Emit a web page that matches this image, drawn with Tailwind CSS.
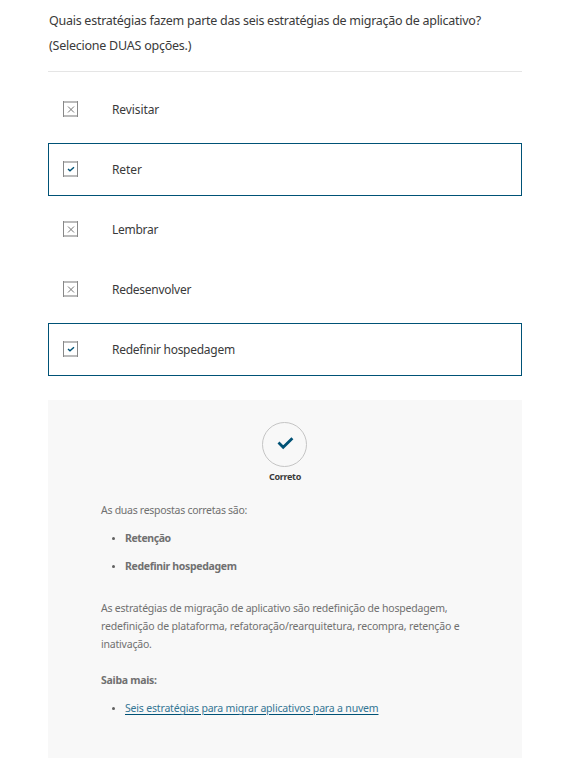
<!DOCTYPE html>
<html lang="pt-BR">
<head>
<meta charset="utf-8">
<title>Teste de conhecimento</title>
<script src="https://cdn.jsdelivr.net/npm/@tailwindcss/browser@4"></script>
</head>
<body class="bg-white font-['Noto_Sans',sans-serif] text-[#3a3a3a]">
<main class="mx-12 flex h-[758px] flex-col overflow-hidden">
  <h1 class="h-[72px] shrink-0 whitespace-nowrap border-b border-[#e5e5e5] pt-2 pl-px text-[12.5px] leading-[25px]">
    <span class="tracking-[-0.265px]">Quais estratégias fazem parte das seis estratégias de migração de aplicativo?</span><br><span class="tracking-[-0.24px]">(Selecione DUAS opções.)</span>
  </h1>
  <ul class="mt-[11px] flex shrink-0 flex-col gap-[7px] text-[12px]">
    <li class="flex h-[53px] items-center border border-transparent pl-[14px]">
      <svg class="mr-[34px] mb-0.5 h-4 w-[15px]" viewBox="0 0 15 16" fill="none"><path d="M0 1h15M0 15h15" stroke="#bbb" stroke-width="2"/><path d="M.5 0v16M14.5 0v16" stroke="#888"/><path d="m5 5.5 6 6m0-6-6 6" stroke="#777"/></svg>
      <span class="tracking-[-0.1px]">Revisitar</span>
    </li>
    <li class="flex h-[53px] items-center border border-[#005276] pl-[14px]">
      <svg class="mr-[34px] mb-0.5 h-4 w-[15px]" viewBox="0 0 15 16" fill="none"><path d="M0 1h15M0 15h15" stroke="#bbb" stroke-width="2"/><path d="M.5 0v16M14.5 0v16" stroke="#888"/><path d="m5 8 2 1.8 4-3.6" stroke="#005276" stroke-width="1.4"/></svg>
      <span class="tracking-[-0.1px]">Reter</span>
    </li>
    <li class="flex h-[53px] items-center border border-transparent pl-[14px]">
      <svg class="mr-[34px] mb-0.5 h-4 w-[15px]" viewBox="0 0 15 16" fill="none"><path d="M0 1h15M0 15h15" stroke="#bbb" stroke-width="2"/><path d="M.5 0v16M14.5 0v16" stroke="#888"/><path d="m5 5.5 6 6m0-6-6 6" stroke="#777"/></svg>
      <span class="tracking-[-0.27px]">Lembrar</span>
    </li>
    <li class="flex h-[53px] items-center border border-transparent pl-[14px]">
      <svg class="mr-[34px] mb-0.5 h-4 w-[15px]" viewBox="0 0 15 16" fill="none"><path d="M0 1h15M0 15h15" stroke="#bbb" stroke-width="2"/><path d="M.5 0v16M14.5 0v16" stroke="#888"/><path d="m5 5.5 6 6m0-6-6 6" stroke="#777"/></svg>
      <span class="tracking-[-0.27px]">Redesenvolver</span>
    </li>
    <li class="flex h-[53px] items-center border border-[#005276] pl-[14px]">
      <svg class="mr-[34px] mb-0.5 h-4 w-[15px]" viewBox="0 0 15 16" fill="none"><path d="M0 1h15M0 15h15" stroke="#bbb" stroke-width="2"/><path d="M.5 0v16M14.5 0v16" stroke="#888"/><path d="m5 8 2 1.8 4-3.6" stroke="#005276" stroke-width="1.4"/></svg>
      <span class="tracking-[-0.27px]">Redefinir hospedagem</span>
    </li>
  </ul>
  <section class="mt-6 grow bg-[#f8f8f8] px-[53px] pt-[22px] text-[10.5px] leading-[18px] text-[#707070]">
    <div class="flex flex-col items-center">
      <svg class="mr-px h-[45px] w-[45px]" viewBox="0 0 45 45" fill="none"><circle cx="22.5" cy="22.5" r="22" stroke="#c4c4c4"/><path d="m16.5 20.5 4.7 4.7 9.2-9" stroke="#005276" stroke-width="2.8"/></svg>
      <p class="mt-px text-[9px] font-bold tracking-[-0.3px] text-[#3a3a3a]">Correto</p>
    </div>
    <p class="mt-[15px] whitespace-nowrap"><span class="tracking-[-0.28px]">As duas respostas corretas são:</span></p>
    <ul class="mt-2.5 flex flex-col gap-2.5 font-bold">
      <li class="flex items-center gap-[10px] pl-[11px]"><i class="mt-px h-[3px] w-[3px] rounded-full bg-[#606060]"></i><span class="tracking-[-0.42px]">Retenção</span></li>
      <li class="flex items-center gap-[10px] pl-[11px]"><i class="mt-px h-[3px] w-[3px] rounded-full bg-[#606060]"></i><span class="tracking-[-0.33px]">Redefinir hospedagem</span></li>
    </ul>
    <p class="mt-6 whitespace-nowrap"><span class="tracking-[-0.21px]">As estratégias de migração de aplicativo são redefinição de hospedagem,</span><br><span class="tracking-[-0.17px]">redefinição de plataforma, refatoração/rearquitetura, recompra, retenção e</span><br><span class="tracking-[-0.2px]">inativação.</span></p>
    <p class="mt-[18px] font-bold"><span class="tracking-[-0.27px]">Saiba mais:</span></p>
    <ul class="mt-2.5">
      <li class="flex items-center gap-[10px] pl-[11px]"><i class="mt-px h-[3px] w-[3px] rounded-full bg-[#606060]"></i><a href="#" class="whitespace-nowrap tracking-[-0.18px] text-[#337594] underline decoration-[#005276] decoration-1 underline-offset-2">Seis estratégias para migrar aplicativos para a nuvem</a></li>
    </ul>
  </section>
</main>
</body>
</html>
